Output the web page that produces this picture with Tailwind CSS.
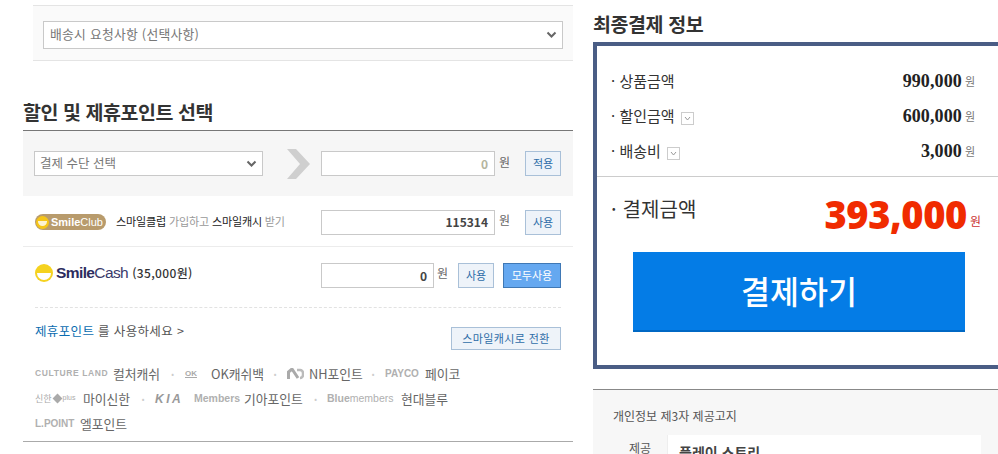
<!DOCTYPE html>
<html lang="ko">
<head>
    <meta charset="UTF-8">
    <meta name="viewport" content="width=device-width, initial-scale=1.0">
    <title>최종결제 정보</title>
    <script src="https://cdn.jsdelivr.net/npm/@tailwindcss/browser@4"></script>
</head>
<body class="bg-white h-[454px] overflow-hidden font-['Noto_Sans_CJK_KR','Noto_Sans',sans-serif] text-[12px] text-[#666]">
<div class="flex h-[454px] overflow-hidden">

    <!-- 왼쪽: 배송 요청 + 할인 -->
    <div class="w-[550px] ml-[23px] shrink-0">
        <div class="ml-[10px] mt-[5px] h-[56px] bg-[#fafafa] border-y border-[#e4e4e4] px-[10px] pt-[15px]">
            <div class="h-[28px] bg-white border border-[#c9c9c9] flex items-center justify-between pl-[6px] pr-[5px] pb-[3px]">
                <span class="text-[12.8px] tracking-[0.25px] text-[#777]">배송시 요청사항 (선택사항)</span>
                <svg class="w-[11px] h-[8px] mt-[3px]" viewBox="0 0 11 8"><path d="M1.5 1.5 5.5 5.5 9.5 1.5" fill="none" stroke="#666" stroke-width="2"/></svg>
            </div>
        </div>

        <h2 class="mt-[36px] h-[33px] text-[19.5px] leading-[30px] font-bold text-[#333] tracking-[-0.45px]">할인 및 제휴포인트 선택</h2>
        <div class="border-t border-[#777] h-[66px] bg-[#f6f6f6] flex items-center pl-[11px] pr-[12px]">
            <div class="w-[229px] h-[25px] bg-white border border-[#c9c9c9] flex items-center justify-between pl-[5px] pr-[5px]">
                <span class="text-[12.5px] text-[#777]">결제 수단 선택</span>
                <svg class="w-[11px] h-[8px]" viewBox="0 0 11 8"><path d="M1.5 1.5 5.5 5.5 9.5 1.5" fill="none" stroke="#666" stroke-width="2"/></svg>
            </div>
            <svg class="ml-[24px] w-[23px] h-[30px]" viewBox="0 0 23 30"><path d="M0 0H9L23 15 9 30H0L13 15Z" fill="#cfcfcf"/></svg>
            <div class="ml-[11px] w-[174px] h-[25px] bg-white border border-[#c9c9c9] flex items-center justify-end pr-[6px] font-bold text-[#b5b5a0]">0</div>
            <span class="ml-[4px] w-[26px] pb-[4px]">원</span>
            <button class="w-[36px] h-[25px] bg-[#eef3f9] border border-[#a9c0d8] text-[#2f6da8] text-[11px]">적용</button>
        </div>

        <div class="h-[51px] border-b border-[#ececec] flex items-center pl-[12px] pr-[12px] pt-[2px]">
            <div class="w-[71px] h-[16px] rounded-full bg-[#b89b6c] flex items-center pl-[1px] pr-[1px]">
                <span class="w-[13px] h-[13px] rounded-full bg-[#f5c518] overflow-hidden flex items-end justify-center"><span class="block w-[9px] h-[5px] bg-white/80 rounded-b-full mb-[3px]"></span></span>
                <span class="ml-[2px] font-['Liberation_Sans',sans-serif] text-[11px] leading-none text-white font-bold">Smile<span class="font-normal">Club</span></span>
            </div>
            <span class="ml-[10px] w-[205px] text-[11.1px] tracking-[-0.2px] text-[#999] whitespace-nowrap pb-[2px]"><span class="text-[#222]">스마일클럽</span> 가입하고 <span class="text-[#222]">스마일캐시</span> 받기</span>
            <div class="w-[174px] h-[25px] bg-white border border-[#c9c9c9] flex items-center justify-end pr-[6px] font-bold text-[#444]">115314</div>
            <span class="ml-[4px] w-[26px] pb-[4px]">원</span>
            <button class="w-[36px] h-[25px] bg-[#eef3f9] border border-[#a9c0d8] text-[#2f6da8] text-[11px]">사용</button>
        </div>

        <div class="h-[61px] mx-[12px] border-b border-dashed border-[#e2e2e2] flex pt-[16px]">
            <div class="w-[286px] h-[19px] flex items-center">
                <span class="relative w-[18px] h-[18px] rounded-full bg-[#f5d21f] overflow-hidden shrink-0"><span class="absolute left-[2px] top-[9px] w-[14px] h-[7px] bg-white rounded-b-full"></span></span>
                <span class="ml-[3px] font-['Liberation_Sans',sans-serif] text-[15.5px] tracking-[-0.6px] text-[#2c2c5e] font-bold">Smile<span class="font-normal text-[#3a3a6a]">Cash</span></span>
                <span class="ml-[4px] text-[12px] font-medium tracking-[0.35px] text-[#333]">(35,000원)</span>
            </div>
            <div class="w-[113px] h-[25px] bg-white border border-[#c9c9c9] flex items-center justify-end pr-[6px] font-bold text-[#444]">0</div>
            <span class="ml-[3px] w-[21px] leading-[20px]">원</span>
            <button class="w-[36px] h-[25px] bg-[#eef3f9] border border-[#a9c0d8] text-[#2f6da8] text-[11px]">사용</button>
            <button class="ml-[9px] w-[58px] h-[25px] bg-[#65a8f0] border border-[#3f78b5] text-white text-[11px]">모두사용</button>
        </div>

        <div class="mx-[12px] flex justify-between items-start pt-[14px] h-[53px]">
            <span class="text-[12.5px] tracking-[0.35px] text-[#555]"><span class="text-[#0a6cb0]">제휴포인트</span> 를 사용하세요 &gt;</span>
            <button class="mt-[5px] w-[110px] h-[23px] bg-[#eef3f9] border border-[#a9c0d8] text-[#2f6da8] text-[11px] tracking-[0.4px]">스마일캐시로 전환</button>
        </div>

        <div class="mx-[12px] h-[80px] text-[12.8px] text-[#666]">
            <div class="h-[25px] flex items-center whitespace-nowrap">
                <span class="w-[73px] font-['Liberation_Sans',sans-serif] font-bold text-[8.5px] tracking-[0.6px] text-[#b0b0b0]">CULTURE LAND</span>
                <span class="ml-[5px] w-[47px]">컬처캐쉬</span>
                <span class="w-[25px] text-center text-[8px] text-[#ccc]">•</span>
                <span class="w-[26px] font-['Liberation_Sans',sans-serif] text-[8px] font-bold text-[#aaa] underline">OK</span>
                <span class="w-[52px]">OK캐쉬백</span>
                <span class="w-[24px] text-center text-[8px] text-[#ccc]">•</span>
                <svg class="w-[17px] h-[12px]" viewBox="0 0 17 12"><path d="M1.5 11V4L5 1 11 10" fill="none" stroke="#aaa" stroke-width="3"/><path d="M10 2h3a3 3 0 0 1 3 3v2a3 3 0 0 1-3 3" fill="none" stroke="#bbb" stroke-width="2.5"/></svg>
                <span class="ml-[5px] w-[52px]">NH포인트</span>
                <span class="w-[24px] text-center text-[8px] text-[#ccc]">•</span>
                <span class="w-[35px] font-['Liberation_Sans',sans-serif] text-[10px] font-bold text-[#b0b0b0]">PAYCO</span>
                <span class="ml-[5px]">페이코</span>
            </div>
            <div class="h-[25px] flex items-center whitespace-nowrap">
                <span class="w-[43px] flex items-center"><span class="text-[9px] text-[#aaa]">신한</span><span class="mx-[2px] w-[7px] h-[7px] rotate-45 bg-[#aaa]"></span><span class="font-['Liberation_Sans',sans-serif] text-[7px] text-[#aaa]">plus</span></span>
                <span class="ml-[5px] w-[48px]">마이신한</span>
                <span class="w-[24px] text-center text-[8px] text-[#ccc]">•</span>
                <span class="w-[35px] font-['Liberation_Sans',sans-serif] text-[12px] font-bold italic tracking-[2.5px] text-[#999]">KIA</span>
                <span class="ml-[4px] w-[46px] font-['Liberation_Sans',sans-serif] text-[10.5px] font-bold text-[#b0b0b0]">Members</span>
                <span class="ml-[4px] w-[60px]">기아포인트</span>
                <span class="w-[23px] text-center text-[8px] text-[#ccc]">•</span>
                <span class="w-[70px] font-['Liberation_Sans',sans-serif] text-[10.5px] text-[#b0b0b0]"><b>Blue</b>members</span>
                <span class="ml-[4px]">현대블루</span>
            </div>
            <div class="h-[25px] flex items-center whitespace-nowrap">
                <span class="w-[40px] font-['Liberation_Sans',sans-serif] text-[10px] font-bold text-[#b0b0b0]">L.POINT</span>
                <span class="ml-[5px]">엘포인트</span>
            </div>
        </div>
        <div class="border-t border-[#aaa]"></div>
    </div>

    <!-- 오른쪽: 최종결제 -->
    <div class="w-[405px] ml-[20px] shrink-0">
        <h2 class="mt-[8px] h-[34px] text-[19.5px] leading-[32px] font-bold text-[#333] tracking-[-0.4px]">최종결제 정보</h2>
        <div class="w-[430px] h-[327px] border-4 border-[#4a5d85] bg-white">
            <div class="h-[131px] border-b border-[#ccc] pt-[18px] pl-[14px] pr-[23px] w-[401px] text-[15px] text-[#333]">
                <div class="h-[35px] flex items-center justify-between"><span>· 상품금액</span><span class="flex items-center"><b class="font-['Liberation_Serif',serif] text-[18px] tracking-[0.1px] text-[#222]">990,000</b><span class="ml-[3px] text-[11px] text-[#777]">원</span></span></div>
                <div class="h-[35px] flex items-center justify-between">
                    <span class="flex items-center">· 할인금액<span class="ml-[6px] mt-[3px] w-[13px] h-[13px] border border-[#ccc] flex items-center justify-center"><svg class="w-[7px] h-[5px]" viewBox="0 0 7 5"><path d="M1 1 3.5 4 6 1" fill="none" stroke="#999"/></svg></span></span>
                    <span class="flex items-center"><b class="font-['Liberation_Serif',serif] text-[18px] tracking-[0.1px] text-[#222]">600,000</b><span class="ml-[3px] text-[11px] text-[#777]">원</span></span>
                </div>
                <div class="h-[35px] flex items-center justify-between">
                    <span class="flex items-center">· 배송비<span class="ml-[6px] mt-[3px] w-[13px] h-[13px] border border-[#ccc] flex items-center justify-center"><svg class="w-[7px] h-[5px]" viewBox="0 0 7 5"><path d="M1 1 3.5 4 6 1" fill="none" stroke="#999"/></svg></span></span>
                    <span class="flex items-center"><b class="font-['Liberation_Serif',serif] text-[18px] tracking-[0.1px] text-[#222]">3,000</b><span class="ml-[3px] text-[11px] text-[#777]">원</span></span>
                </div>
            </div>
            <div class="w-[401px] flex justify-between pl-[14px] pr-[17px] h-[75px]">
                <span class="pt-[18px] text-[20px] leading-[27px] tracking-[0.1px] text-[#333]">· 결제금액</span>
                <span class="flex items-start pt-[15px]"><b class="font-['Noto_Sans',sans-serif] text-[38px] leading-[44px] font-black tracking-[-0.4px] text-[#f02b00]">393,000</b><span class="ml-[3px] mt-[20px] text-[12px] text-[#c33]">원</span></span>
            </div>
            <button class="block ml-[36px] w-[332px] h-[80px] bg-[#047ce6] border-b-2 border-[#0068c4] text-white text-[31.5px] font-medium">결제하기</button>
        </div>
        <div class="mt-[20px] border-t border-[#888] bg-[#f7f7f7] h-[70px] pl-[20px] pt-[16px] text-[12px] text-[#555]">
            <p class="leading-[20px]">개인정보 제3자 제공고지</p>
            <div class="mt-[9px] w-[368px] h-[40px] bg-white flex">
                <div class="w-[55px] bg-[#f7f7f7] border-r border-[#eee] text-center leading-[18px] pt-[4px]">제공</div>
                <div class="pl-[11px] pt-[7px] font-bold text-[14px] text-[#444]">플레이 스토리</div>
            </div>
        </div>
    </div>
</div>
</body>
</html>
